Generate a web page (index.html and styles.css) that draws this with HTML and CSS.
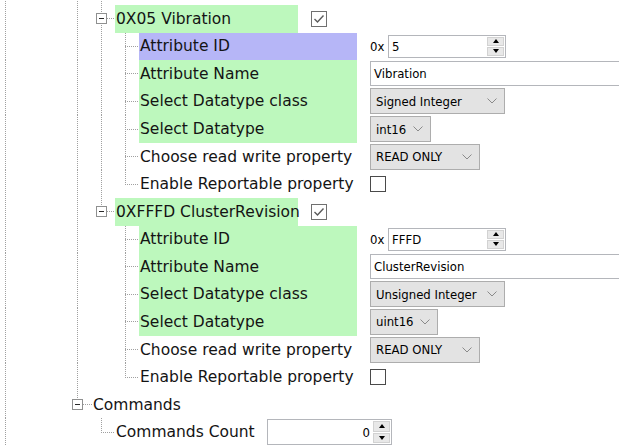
FILE: index.html
```html
<!DOCTYPE html>
<html>
<head>
<meta charset="utf-8">
<link rel="stylesheet" href="styles.css">
</head>
<body>
<div class="tree">
  <div class="row">
    <span class="g v"></span><span class="g"></span><span class="g"></span><span class="g v"></span><span class="g v"></span>
    <span class="c last"></span>
    <span class="lbl"></span>
    <span class="ctl"><span class="chk"></span></span>
  </div>

  <div class="row">
    <span class="g v"></span><span class="g"></span><span class="g"></span><span class="g v"></span>
    <span class="c"><span class="exp"></span></span>
    <span class="hlbl green">0X05 Vibration</span>
    <span class="hctl"><span class="chk on"><svg width="14" height="14" viewBox="0 0 14 14"><polyline points="2.5,7 5.5,10 11.5,3.5" fill="none" stroke="#5a5a5a" stroke-width="1.4"/></svg></span></span>
  </div>
  <div class="row">
    <span class="g v"></span><span class="g"></span><span class="g"></span><span class="g v"></span><span class="g v"></span>
    <span class="c"></span>
    <span class="lbl blue">Attribute ID</span>
    <span class="ctl hex"><span class="px">0x</span><span class="spin"><span class="val">5</span><span class="btns"><span><i class="up"></i></span><span><i class="dn"></i></span></span></span></span>
  </div>
  <div class="row">
    <span class="g v"></span><span class="g"></span><span class="g"></span><span class="g v"></span><span class="g v"></span>
    <span class="c"></span>
    <span class="lbl green">Attribute Name</span>
    <span class="ctl"><span class="text">Vibration</span></span>
  </div>
  <div class="row">
    <span class="g v"></span><span class="g"></span><span class="g"></span><span class="g v"></span><span class="g v"></span>
    <span class="c"></span>
    <span class="lbl green">Select Datatype class</span>
    <span class="ctl"><span class="combo w-class">Signed Integer<svg width="10" height="6" viewBox="0 0 10 6"><polyline points="0.5,0.5 5,5 9.5,0.5" fill="none" stroke="#8a8a8a" stroke-width="1"/></svg></span></span>
  </div>
  <div class="row">
    <span class="g v"></span><span class="g"></span><span class="g"></span><span class="g v"></span><span class="g v"></span>
    <span class="c"></span>
    <span class="lbl green">Select Datatype</span>
    <span class="ctl"><span class="combo w-int">int16<svg width="10" height="6" viewBox="0 0 10 6"><polyline points="0.5,0.5 5,5 9.5,0.5" fill="none" stroke="#8a8a8a" stroke-width="1"/></svg></span></span>
  </div>
  <div class="row">
    <span class="g v"></span><span class="g"></span><span class="g"></span><span class="g v"></span><span class="g v"></span>
    <span class="c"></span>
    <span class="lbl">Choose read write property</span>
    <span class="ctl"><span class="combo w-rw">READ ONLY<svg width="10" height="6" viewBox="0 0 10 6"><polyline points="0.5,0.5 5,5 9.5,0.5" fill="none" stroke="#8a8a8a" stroke-width="1"/></svg></span></span>
  </div>
  <div class="row">
    <span class="g v"></span><span class="g"></span><span class="g"></span><span class="g v"></span><span class="g v"></span>
    <span class="c last"></span>
    <span class="lbl">Enable Reportable property</span>
    <span class="ctl"><span class="chk"></span></span>
  </div>

  <div class="row">
    <span class="g v"></span><span class="g"></span><span class="g"></span><span class="g v"></span>
    <span class="c last"><span class="exp"></span></span>
    <span class="hlbl green">0XFFFD ClusterRevision</span>
    <span class="hctl"><span class="chk on"><svg width="14" height="14" viewBox="0 0 14 14"><polyline points="2.5,7 5.5,10 11.5,3.5" fill="none" stroke="#5a5a5a" stroke-width="1.4"/></svg></span></span>
  </div>
  <div class="row">
    <span class="g v"></span><span class="g"></span><span class="g"></span><span class="g v"></span><span class="g"></span>
    <span class="c"></span>
    <span class="lbl green">Attribute ID</span>
    <span class="ctl hex"><span class="px">0x</span><span class="spin"><span class="val">FFFD</span><span class="btns"><span><i class="up"></i></span><span><i class="dn"></i></span></span></span></span>
  </div>
  <div class="row">
    <span class="g v"></span><span class="g"></span><span class="g"></span><span class="g v"></span><span class="g"></span>
    <span class="c"></span>
    <span class="lbl green">Attribute Name</span>
    <span class="ctl"><span class="text">ClusterRevision</span></span>
  </div>
  <div class="row">
    <span class="g v"></span><span class="g"></span><span class="g"></span><span class="g v"></span><span class="g"></span>
    <span class="c"></span>
    <span class="lbl green">Select Datatype class</span>
    <span class="ctl"><span class="combo w-class">Unsigned Integer<svg width="10" height="6" viewBox="0 0 10 6"><polyline points="0.5,0.5 5,5 9.5,0.5" fill="none" stroke="#8a8a8a" stroke-width="1"/></svg></span></span>
  </div>
  <div class="row">
    <span class="g v"></span><span class="g"></span><span class="g"></span><span class="g v"></span><span class="g"></span>
    <span class="c"></span>
    <span class="lbl green">Select Datatype</span>
    <span class="ctl"><span class="combo w-uint">uint16<svg width="10" height="6" viewBox="0 0 10 6"><polyline points="0.5,0.5 5,5 9.5,0.5" fill="none" stroke="#8a8a8a" stroke-width="1"/></svg></span></span>
  </div>
  <div class="row">
    <span class="g v"></span><span class="g"></span><span class="g"></span><span class="g v"></span><span class="g"></span>
    <span class="c"></span>
    <span class="lbl">Choose read write property</span>
    <span class="ctl"><span class="combo w-rw">READ ONLY<svg width="10" height="6" viewBox="0 0 10 6"><polyline points="0.5,0.5 5,5 9.5,0.5" fill="none" stroke="#8a8a8a" stroke-width="1"/></svg></span></span>
  </div>
  <div class="row">
    <span class="g v"></span><span class="g"></span><span class="g"></span><span class="g v"></span><span class="g"></span>
    <span class="c last"></span>
    <span class="lbl">Enable Reportable property</span>
    <span class="ctl"><span class="chk"></span></span>
  </div>

  <div class="row">
    <span class="g v"></span><span class="g"></span><span class="g"></span>
    <span class="c c15 last"><span class="exp"></span></span>
    <span class="plain">Commands</span>
  </div>
  <div class="row">
    <span class="g v"></span><span class="g"></span><span class="g"></span><span class="g"></span>
    <span class="c last"></span>
    <span class="cnt">Commands Count</span>
    <span class="spin num"><span class="val">0</span><span class="btns"><span><i class="up"></i></span><span><i class="dn"></i></span></span></span>
  </div>
</div>
</body>
</html>
```

FILE: styles.css
```css
html, body {
  margin: 0;
  padding: 0;
  background: #ffffff;
  overflow: hidden;
}
body {
  font-family: "DejaVu Sans", Verdana, sans-serif;
  font-size: 15.5px;
  color: #141414;
}
.tree {
  padding-left: 5px;
  margin-top: -22.57px;
}
.row {
  display: flex;
  align-items: stretch;
  height: 27.57px;
  white-space: nowrap;
}
.g {
  flex: none;
  width: 24px;
}
.g.v {
  background: repeating-linear-gradient(to bottom, #a0a0a0 0 1px, transparent 1px 2px) 0 0 / 1px 100% no-repeat;
}
.c {
  flex: none;
  width: 14px;
  display: flex;
  align-items: center;
  background-image:
    repeating-linear-gradient(to bottom, #a0a0a0 0 1px, transparent 1px 2px),
    repeating-linear-gradient(to right, #a0a0a0 0 1px, transparent 1px 2px);
  background-position: 0 0, 0 50%;
  background-size: 1px 100%, 100% 1px;
  background-repeat: no-repeat;
}
.c.c15 { width: 15px; }
.c.last {
  background-size: 1px 50%, 100% 1px;
}
.exp {
  flex: none;
  width: 11px;
  height: 11px;
  box-sizing: border-box;
  margin-left: -5px;
  border: 1px solid #8f9090;
  background: #fff;
  display: flex;
  align-items: center;
  justify-content: center;
}
.exp::before {
  content: "";
  width: 5px;
  height: 1px;
  background: #2a2a2a;
}
.green { background: #bdf8bd; }
.blue { background: #b6b6f7; }
.hlbl {
  flex: none;
  width: 182px;
  padding-left: 1px;
  display: flex;
  align-items: center;
}
.hctl {
  flex: none;
  margin-left: 13px;
  display: flex;
  align-items: center;
}
.lbl {
  flex: none;
  width: 217px;
  padding-left: 1px;
  display: flex;
  align-items: center;
}
.plain {
  padding-left: 1px;
  display: flex;
  align-items: center;
}
.cnt {
  flex: none;
  width: 151px;
  padding-left: 1px;
  display: flex;
  align-items: center;
}
.ctl {
  flex: none;
  margin-left: 13px;
  display: flex;
  align-items: center;
  font-family: "DejaVu Sans Condensed", "DejaVu Sans", sans-serif;
  font-size: 13px;
  color: #000;
}
.chk {
  width: 16px;
  height: 16px;
  box-sizing: border-box;
  border: 1px solid #4a4a4a;
  background: #fff;
  display: flex;
  align-items: center;
  justify-content: center;
}
.chk.on {
  border-color: #707070;
}
.hex .px {
  width: 18px;
}
.spin {
  flex: none;
  width: 118px;
  height: 23px;
  box-sizing: border-box;
  border: 1px solid #b4b6bb;
  background: #fff;
  display: flex;
  align-items: stretch;
  font-family: "DejaVu Sans Condensed", "DejaVu Sans", sans-serif;
  font-size: 13px;
  color: #000;
}
.spin .val {
  flex: 1;
  padding-left: 3px;
  display: flex;
  align-items: center;
}
.spin .btns {
  flex: none;
  width: 17px;
  margin: 1px;
  display: flex;
  flex-direction: column;
  gap: 1px;
}
.spin .btns span {
  flex: 1;
  background: #e8e8e8;
  border: 1px solid #d2d2d2;
  display: flex;
  align-items: center;
  justify-content: center;
}
.up {
  width: 0;
  height: 0;
  border-left: 3.5px solid transparent;
  border-right: 3.5px solid transparent;
  border-bottom: 4px solid #000;
}
.dn {
  width: 0;
  height: 0;
  border-left: 3.5px solid transparent;
  border-right: 3.5px solid transparent;
  border-top: 4px solid #000;
}
.spin.num {
  width: 125px;
  height: 26px;
  align-self: center;
}
.spin.num .val {
  justify-content: flex-end;
  padding-right: 2px;
}
.text {
  width: 270px;
  height: 25px;
  box-sizing: border-box;
  border: 1px solid #b4b6bb;
  background: #fff;
  padding-left: 3px;
  display: flex;
  align-items: center;
}
.combo {
  height: 26px;
  box-sizing: border-box;
  border: 1px solid #adadad;
  background: #e3e3e3;
  padding: 0 7px 0 5px;
  display: flex;
  align-items: center;
  justify-content: space-between;
}
.combo svg { margin-left: 6px; }
.w-class { width: 135px; }
.w-int { width: 61px; }
.w-uint { width: 68px; }
.w-rw { width: 110px; }
```
